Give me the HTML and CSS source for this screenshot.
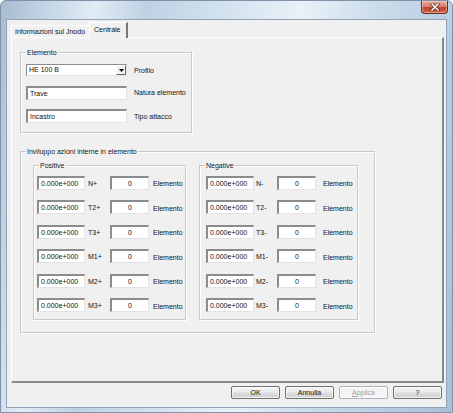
FILE: index.html
```html
<!DOCTYPE html>
<html lang="it">
<head>
<meta charset="utf-8">
<title>Centrale</title>
<link rel="stylesheet" href="styles.css">
</head>
<body>
<div class="window">
  <div class="titlebar">
    <div class="close-btn">
      <svg width="12" height="8" viewBox="0 0 12 8"><path d="M3 1 L9 7 M9 1 L3 7" stroke="#5a2218" stroke-width="3" stroke-linecap="square"/><path d="M3 1 L9 7 M9 1 L3 7" stroke="#fff" stroke-width="1.6" stroke-linecap="square"/></svg>
    </div>
  </div>
  <div class="client">
    <div class="tabs">
      <div class="tab">Informazioni sul Jnodo</div>
      <div class="tab tab-active">Centrale</div>
    </div>
    <div class="panel">
      <fieldset class="group group-elemento">
        <legend>Elemento</legend>
        <div class="elemento-grid">
          <div class="combo"><span class="combo-text">HE 100 B</span><span class="combo-btn"><svg width="5" height="3" viewBox="0 0 5 3"><path d="M0 0 H5 L2.5 3 Z" fill="#000"/></svg></span></div>
          <span class="lbl">Profilo</span>
          <div class="edit edit-text">Trave</div>
          <span class="lbl">Natura elemento</span>
          <div class="edit edit-text">Incastro</div>
          <span class="lbl">Tipo attacco</span>
        </div>
      </fieldset>
      <fieldset class="group group-inviluppo">
        <legend>Inviluppo azioni interne in elemento</legend>
        <div class="inviluppo-row">
          <fieldset class="group group-pos">
            <legend>Positive</legend>
            <div class="azioni azioni-pos">
              <div class="edit edit-val">0.000e+000</div><span class="lbl code">N+</span><div class="edit edit-num">0</div><span class="lbl el">Elemento</span>
              <div class="edit edit-val">0.000e+000</div><span class="lbl code">T2+</span><div class="edit edit-num">0</div><span class="lbl el">Elemento</span>
              <div class="edit edit-val">0.000e+000</div><span class="lbl code">T3+</span><div class="edit edit-num">0</div><span class="lbl el">Elemento</span>
              <div class="edit edit-val">0.000e+000</div><span class="lbl code">M1+</span><div class="edit edit-num">0</div><span class="lbl el">Elemento</span>
              <div class="edit edit-val">0.000e+000</div><span class="lbl code">M2+</span><div class="edit edit-num">0</div><span class="lbl el">Elemento</span>
              <div class="edit edit-val">0.000e+000</div><span class="lbl code">M3+</span><div class="edit edit-num">0</div><span class="lbl el">Elemento</span>
            </div>
          </fieldset>
          <fieldset class="group group-neg">
            <legend>Negative</legend>
            <div class="azioni azioni-neg">
              <div class="edit edit-val">0.000e+000</div><span class="lbl code">N-</span><div class="edit edit-num">0</div><span class="lbl el">Elemento</span>
              <div class="edit edit-val">0.000e+000</div><span class="lbl code">T2-</span><div class="edit edit-num">0</div><span class="lbl el">Elemento</span>
              <div class="edit edit-val">0.000e+000</div><span class="lbl code">T3-</span><div class="edit edit-num">0</div><span class="lbl el">Elemento</span>
              <div class="edit edit-val">0.000e+000</div><span class="lbl code">M1-</span><div class="edit edit-num">0</div><span class="lbl el">Elemento</span>
              <div class="edit edit-val">0.000e+000</div><span class="lbl code">M2-</span><div class="edit edit-num">0</div><span class="lbl el">Elemento</span>
              <div class="edit edit-val">0.000e+000</div><span class="lbl code">M3-</span><div class="edit edit-num">0</div><span class="lbl el">Elemento</span>
            </div>
          </fieldset>
        </div>
      </fieldset>
    </div>
    <div class="buttons">
      <div class="btn">OK</div>
      <div class="btn">Annulla</div>
      <div class="btn btn-disabled"><u>A</u>pplica</div>
      <div class="btn">?</div>
    </div>
  </div>
</div>
</body>
</html>
```
FILE: styles.css
```css
* { box-sizing: border-box; }
html, body { margin: 0; padding: 0; }
body {
  width: 453px;
  height: 413px;
  overflow: hidden;
  font-family: "Liberation Sans", Arial, sans-serif;
  font-size: 7px;
  color: #111;
  background: #fff;
}
.window {
  width: 453px;
  height: 413px;
  display: flex;
  flex-direction: column;
  padding: 0 5px 4px 5px;
  border: 1px solid #7d91a8;
  border-radius: 6px 6px 0 0;
  background: linear-gradient(100deg, #a8bcd0 0%, #c6d7e7 10%, #e2ecf5 18%, #bed1e3 28%, #d2e1ee 42%, #e9f1f8 58%, #cbdcea 72%, #b8cce0 88%, #aabfd3 100%);
}
.titlebar {
  height: 18px;
  flex: none;
  display: flex;
  justify-content: flex-end;
  margin-right: -1px;
}
.close-btn {
  width: 27px;
  height: 13px;
  border: 1px solid #6e2b20;
  border-top: none;
  border-radius: 0 0 4px 4px;
  background: linear-gradient(#e7a899 0%, #d9806c 45%, #c0402b 55%, #d06a4e 100%);
  display: flex;
  align-items: center;
  justify-content: center;
  box-shadow: inset 0 0 0 1px rgba(255,255,255,0.35);
}
.client {
  flex: 1;
  background: #f0f0f0;
  border: 1px solid #92a3b6;
  display: flex;
  flex-direction: column;
}
.tabs {
  display: flex;
  align-items: flex-end;
  padding: 3px 0 0 4px;
  height: 17px;
  position: relative;
  z-index: 1;
}
.tab {
  height: 12px;
  line-height: 11px;
  padding: 0 4px 0 3px;
  background: #f0f0f0;
  border-top: 1px solid #fff;
  border-left: 1px solid #fff;
  border-right: 1px solid #a0a0a0;
  white-space: nowrap;
}
.tab-active {
  height: 16px;
  line-height: 13px;
  margin-left: -1px;
  margin-bottom: -1px;
  padding: 0 5px 0 4px;
  border-right: 2px solid #777;
}
.panel {
  width: 433px;
  height: 346px;
  margin-left: 4px;
  border-top: 1px solid #fff;
  border-left: 1px solid #fff;
  border-right: 2px solid #8a8a8a;
  border-bottom: 2px solid #8a8a8a;
  padding: 10px 0 0 8px;
  display: flex;
  flex-direction: column;
  gap: 13.5px;
  align-items: flex-start;
}
.group {
  margin: 0;
  padding: 0;
  border: 1px solid #c9c9c9;
  box-shadow: inset 1px 1px 0 #fff, 1px 1px 0 #fff;
  min-width: 0;
}
.group legend {
  margin-left: 5px;
  padding: 0 1px;
  line-height: 9px;
  height: 9px;
}
.group-elemento { width: 172px; }
.elemento-grid {
  display: grid;
  grid-template-columns: 101px auto;
  grid-template-rows: 12px 14px 14px;
  column-gap: 7px;
  row-gap: 9.5px;
  align-items: center;
  padding: 7px 0 9px 5px;
}
.combo {
  height: 12px;
  background: #fff;
  border-top: 1px solid #8c8c8c;
  border-left: 1px solid #8c8c8c;
  border-right: 1px solid #e3e3e3;
  border-bottom: 1px solid #e3e3e3;
  display: flex;
  align-items: center;
}
.combo-text { flex: 1; padding-left: 2px; line-height: 10px; }
.combo-btn {
  width: 10px;
  height: 10px;
  background: #f0f0f0;
  border-top: 1px solid #fff;
  border-left: 1px solid #fff;
  border-right: 1px solid #696969;
  border-bottom: 1px solid #696969;
  display: flex;
  align-items: center;
  justify-content: center;
}
.lbl { white-space: nowrap; line-height: 9px; }
.edit {
  background: #fff;
  border-top: 2px solid #8c8c8c;
  border-left: 2px solid #8c8c8c;
  border-right: 1px solid #e3e3e3;
  border-bottom: 1px solid #e3e3e3;
  height: 14px;
  line-height: 9px;
  white-space: nowrap;
  overflow: hidden;
}
.edit-text { padding: 1px 0 0 2px; }
.edit-val { padding: 1px 0 0 2px; }
.edit-num { text-align: center; padding-top: 1px; }
.group-inviluppo { width: 355px; }
.inviluppo-row {
  display: flex;
  gap: 13px;
  padding: 5px 0 12px 12px;
}
.group-pos { width: 153px; }
.group-neg { width: 159px; }
.azioni {
  display: grid;
  grid-template-rows: repeat(6, 14px);
  row-gap: 10.6px;
  align-items: center;
  padding: 6px 0 7px 3px;
}
.azioni-pos { grid-template-columns: 48px 25px 39px auto; }
.azioni-pos .code { padding-left: 3px; padding-top: 1px; }
.azioni-pos .el { padding-left: 4px; padding-top: 2px; }
.azioni-neg { grid-template-columns: 48px 23px 39px auto; padding-left: 6px; }
.azioni-neg .code { padding-left: 2px; padding-top: 1px; }
.azioni-neg .el { padding-left: 7px; padding-top: 2px; }
.buttons {
  display: flex;
  justify-content: flex-end;
  gap: 5px;
  padding: 3px 4px 0 0;
}
.btn {
  width: 49px;
  height: 13px;
  line-height: 11px;
  text-align: center;
  border: 1px solid #707070;
  border-radius: 2px;
  background: linear-gradient(#f3f3f3 0%, #ebebeb 48%, #dddddd 52%, #cfcfcf 100%);
  box-shadow: inset 0 0 0 1px rgba(255,255,255,0.7);
}
.btn-disabled {
  color: #a0a0a0;
  border-color: #adb2b5;
  background: #f4f4f4;
}
```
